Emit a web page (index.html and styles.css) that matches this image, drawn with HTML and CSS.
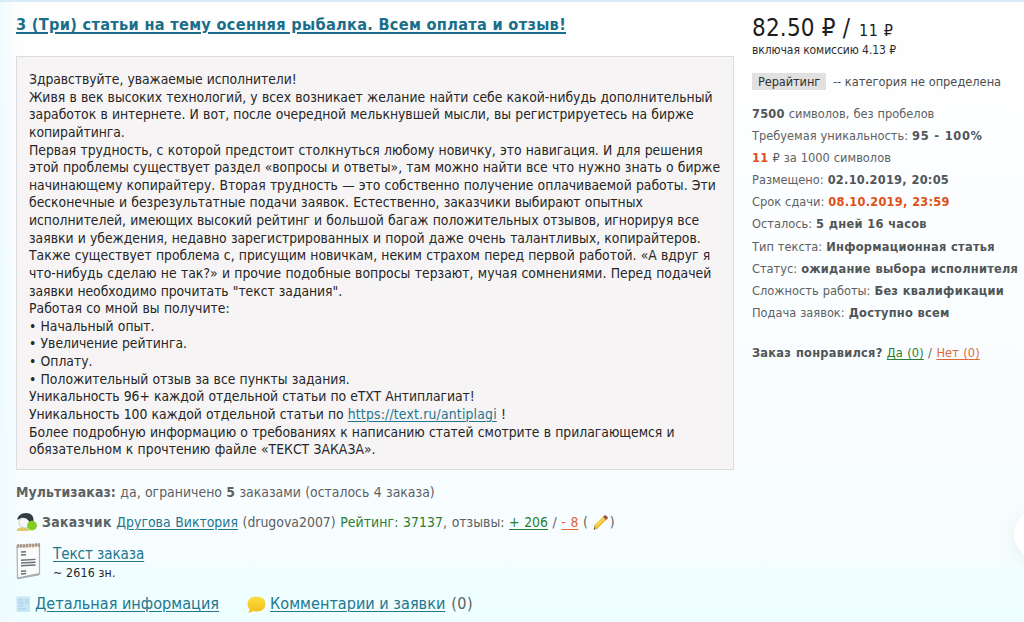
FILE: index.html
```html
<!DOCTYPE html>
<html lang="ru">
<head>
<meta charset="utf-8">
<title>3 (Три) статьи на тему осенняя рыбалка</title>
<link rel="stylesheet" href="styles.css">
</head>
<body>
<div class="page">
  <main class="order">
    <h1 class="title"><a href="#">3 (Три) статьи на тему осенняя рыбалка. Всем оплата и отзыв!</a></h1>
    <div class="description">
      <div class="tight">Здравствуйте, уважаемые исполнители!</div>
      <div>Живя в век высоких технологий, у всех возникает желание найти себе какой-нибудь дополнительный</div>
      <div>заработок в интернете. И вот, после очередной мелькнувшей мысли, вы регистрируетесь на бирже</div>
      <div class="tight">копирайтинга.</div>
      <div>Первая трудность, с которой предстоит столкнуться любому новичку, это навигация. И для решения</div>
      <div>этой проблемы существует раздел «вопросы и ответы», там можно найти все что нужно знать о бирже</div>
      <div>начинающему копирайтеру. Вторая трудность — это собственно получение оплачиваемой работы. Эти</div>
      <div>бесконечные и безрезультатные подачи заявок. Естественно, заказчики выбирают опытных</div>
      <div>исполнителей, имеющих высокий рейтинг и большой багаж положительных отзывов, игнорируя все</div>
      <div>заявки и убеждения, недавно зарегистрированных и порой даже очень талантливых, копирайтеров.</div>
      <div>Также существует проблема с, присущим новичкам, неким страхом перед первой работой. «А вдруг я</div>
      <div class="loose">что-нибудь сделаю не так?» и прочие подобные вопросы терзают, мучая сомнениями. Перед подачей</div>
      <div class="tight">заявки необходимо прочитать "текст задания".</div>
      <div class="loose">Работая со мной вы получите:</div>
      <div>• Начальный опыт.</div>
      <div>• Увеличение рейтинга.</div>
      <div>• Оплату.</div>
      <div>• Положительный отзыв за все пункты задания.</div>
      <div class="tight">Уникальность 96+ каждой отдельной статьи по eTXT Антиплагиат!</div>
      <div class="tight">Уникальность 100 каждой отдельной статьи по <a class="url" href="#">https://text.ru/antiplagi</a> !</div>
      <div>Более подробную информацию о требованиях к написанию статей смотрите в прилагающемся и</div>
      <div class="loose">обязательном к прочтению файле «ТЕКСТ ЗАКАЗА».</div>
    </div>
    <div class="row multi"><b>Мультизаказ:</b> да, ограничено <b>5</b> заказами (осталось 4 заказа)</div>
    <div class="row customer">
      <svg class="user-icon" width="22" height="20" viewBox="0 0 22 20">
        <path d="M1 19V17Q5 14 11 16L14 19Z" fill="#e0cb66"/>
        <ellipse cx="9" cy="10.500" rx="6" ry="5.500" fill="#f5f8fa" stroke="#aab4b8" stroke-width=".7"/>
        <path d="M1.500 8C1 4.500 5 1 10 1C15 1 18 4 17.500 9L14 12C13.500 8.500 10 4.800 5 6Z" fill="#303c40"/>
        <circle cx="16" cy="13.6" r="4.9" fill="#82cc24"/>
      </svg>
      <span><b>Заказчик</b> <a href="#">Другова Виктория</a> (drugova2007) <span class="rating">Рейтинг: 37137</span>, отзывы: <a class="good" href="#">+ 206</a> / <a class="bad" href="#">- 8</a> (</span>
      <svg class="pencil" width="18" height="18" viewBox="0 0 18 18">
        <path d="M1.500 17L3 12L6 15Z" fill="#5b4b35"/>
        <path d="M2.500 12L11 4L14 7L5.500 15.500L3 16Z" fill="#f2b92d"/>
        <path d="M3.700 12.200L11.500 4.800L12.500 5.700L5 13.500Z" fill="#ffd968"/>
        <path d="M11 4L12.300 2.500Q13.500 1.800 15 3.200Q16.300 4.600 15.500 5.700L14 7Z" fill="#99553e"/>
      </svg>
      <span>)</span>
    </div>
    <div class="file">
      <svg width="26" height="38" viewBox="0 0 26 38">
        <path d="M1 4L23.500 3V31.500L1.500 36Z" fill="#fbfbfb" stroke="#a9b0b2" stroke-width="1.2"/>
        <path d="M1.500 36L23.500 31.500V33.200L2 37.300Z" fill="#a4acae"/>
        <path d="M1 4L23.500 3" stroke="#c9bbae" stroke-width="2.400"/>
        <path d="M2 2V6M5 2V6M8 2V6M11 1.700V5.700M14 1.500V5.500M17 1.500V5.500M20 1V5M23 1V5" stroke="#a08470" stroke-width="1.300"/>
        <path d="M5 10L10 9.700M5 13L10 12.700M5 18.200L19.500 17.400M5 21L19.500 20.200M5 23.800L19.500 23M5 29.300L10 29M5 32L10 31.500" stroke="#697176" stroke-width="1.400"/>
      </svg>
      <div class="file-info">
        <a href="#">Текст заказа</a>
        <span class="size">~ 2616 зн.</span>
      </div>
    </div>
    <nav class="tabs">
      <svg width="15" height="17" viewBox="0 0 15 17">
        <path d="M.5.5H14V16H.5Z" fill="#c9e6f6"/>
        <path d="M2 4H7M2 7H8M2 10H7M2 13H10" stroke="#a3cde6"/>
        <path d="M9 3H13V8H9Z" fill="#b8dcf0"/>
      </svg>
      <a class="details" href="#">Детальная информация</a>
      <svg class="bubble" width="19" height="17" viewBox="0 0 19 17">
        <defs>
          <linearGradient id="bubble-fill" x1="0" y1="0" x2="0" y2="1">
            <stop offset="0" stop-color="#fbe045"/>
            <stop offset="1" stop-color="#f3bd18"/>
          </linearGradient>
        </defs>
        <path d="M9.500.5C15 .5 18.500 3.500 18.500 8C18.500 12.500 15 15.500 9.500 15.500Q7.500 15.500 6 15Q4 16.800 1 16.500Q3 15 2.400 12.800Q.5 11 .5 8C.5 3.500 4 .5 9.500.5Z" fill="url(#bubble-fill)"/>
      </svg>
      <a class="comments" href="#">Комментарии и заявки</a>
      <span class="count">(0)</span>
    </nav>
  </main>
  <aside class="summary">
    <div class="price"><span class="total">82.50 ₽</span><span class="slash">/</span><span class="rate">11 ₽</span></div>
    <div class="fee">включая комиссию 4.13 ₽</div>
    <div class="category"><span class="tag">Рерайтинг</span><span>-- категория не определена</span></div>
    <div class="facts">
      <div><b>7500</b> символов, без пробелов</div>
      <div>Требуемая уникальность: <b class="wide">95 - 100%</b></div>
      <div><b class="hot">11</b> ₽ за 1000 символов</div>
      <div>Размещено: <b>02.10.2019, 20:05</b></div>
      <div>Срок сдачи: <b class="hot">08.10.2019, 23:59</b></div>
      <div>Осталось: <b>5 дней 16 часов</b></div>
      <div>Тип текста: <b>Информационная статья</b></div>
      <div>Статус: <b>ожидание выбора исполнителя</b></div>
      <div>Сложность работы: <b>Без квалификации</b></div>
      <div>Подача заявок: <b>Доступно всем</b></div>
    </div>
    <div class="vote"><b>Заказ понравился?</b> <a class="good" href="#">Да (0)</a> / <a class="bad" href="#">Нет (0)</a></div>
  </aside>
  <div class="floating"></div>
</div>
</body>
</html>
```
FILE: styles.css
```css
* { box-sizing: border-box; }
body {
  margin: 0;
  font-family: "DejaVu Sans Condensed", "DejaVu Sans", sans-serif;
  color: #5c6163;
}
a { color: #23768f; text-decoration: underline; text-decoration-thickness: 1px; text-underline-offset: 2px; }
svg { display: block; flex: none; }

.page {
  position: relative;
  display: flex;
  gap: 18px;
  width: 1024px;
  height: 622px;
  padding-left: 16px;
  overflow: hidden;
  border-top: 2px solid #d8ebf6;
  white-space: nowrap;
  background:
    linear-gradient(90deg, #effbff 0, rgba(245, 253, 255, 0) 20px),
    linear-gradient(#fefefe 0, #fdfeff 25%, #f9fdff 70%, #f7fdff 88%, #f0feff 93%, #effeff 100%);
}
.order { width: 718px; }

.title {
  margin: 0;
  height: 54px;
  font-size: 16.2px;
  line-height: 45px;
  letter-spacing: 0.295px;
}
.title a { color: #1b6e8a; text-decoration-thickness: 2px; }

.description {
  height: 414px;
  padding: 14px 12px 0;
  border: 1px solid #dcdcdc;
  background: #f6f4f5;
  color: #262626;
  font-size: 13.8px;
  line-height: 17.62px;
  letter-spacing: -0.01px;
  word-spacing: 0.3px;
}
.tight { letter-spacing: -0.05px; }
.loose { letter-spacing: 0.035px; }
.url { letter-spacing: 0.2px; }

.row {
  height: 30px;
  font-size: 13.9px;
  line-height: 30px;
  word-spacing: 0.4px;
}
.multi { margin-top: 7px; }
.multi b:first-child { letter-spacing: 0.12px; }
.customer { display: flex; align-items: center; word-spacing: 0.6px; line-height: 29px; }
.customer b { letter-spacing: 0.3px; }
.user-icon { margin-right: 4px; }
.pencil { margin: 0 0 0 4px; }
.rating { color: #2b7d31; letter-spacing: 0.06px; }
.good { color: #2b7d31; }
.bad { color: #dc6939; }

.file { display: flex; gap: 11px; height: 47px; padding-top: 5px; }
.file-info { display: flex; flex-direction: column; padding-top: 2px; }
.file-info a { font-size: 15.1px; line-height: 21px; letter-spacing: -0.08px; }
.size { color: #262626; font-size: 12.3px; line-height: 17px; letter-spacing: 0.15px; }

.tabs { display: flex; align-items: center; height: 40px; font-size: 16.1px; line-height: 40px; }
.details { margin-left: 4px; }
.bubble { margin-left: 28px; }
.comments { margin-left: 4px; }
.count { margin-left: 6px; letter-spacing: 0.4px; }

.summary { width: 272px; font-size: 12.7px; }
.price { display: flex; align-items: baseline; height: 39px; padding-top: 7px; color: #1d1d1d; line-height: 38px; }
.total { font-size: 24px; letter-spacing: 0.2px; }
.slash { margin-left: 7px; font-size: 24px; }
.rate { margin-left: 9px; font-size: 16px; letter-spacing: 0.6px; }
.fee { color: #2d2d2d; font-size: 12px; line-height: 18px; letter-spacing: -0.08px; }
.category { display: flex; gap: 7px; margin-top: 14px; color: #4d4d4d; line-height: 18px; }
.tag { width: 74px; height: 17px; padding-left: 6px; background: #e1e1e1; color: #303030; letter-spacing: -0.1px; }
.facts { margin-top: 12px; line-height: 22.1px; word-spacing: 0.4px; }
.facts b { letter-spacing: 0.24px; color: #505557; }
.facts .wide { letter-spacing: 0.65px; }
.facts .hot { color: #df5016; }
.vote { margin-top: 19px; line-height: 20px; word-spacing: 0.6px; letter-spacing: 0.1px; }
.vote b { letter-spacing: 0.25px; color: #505557; }

.floating {
  position: absolute;
  left: 1014px;
  top: 506px;
  width: 52px;
  height: 52px;
  border-radius: 50%;
  background: #fff;
  box-shadow: 0 4px 18px rgba(90, 120, 120, 0.1);
}
```
